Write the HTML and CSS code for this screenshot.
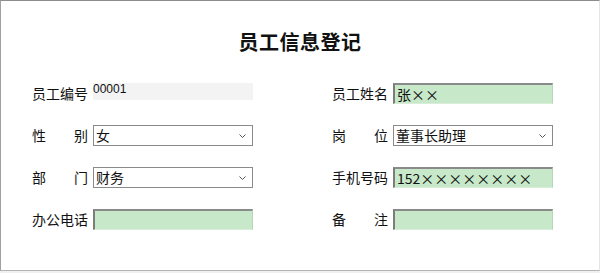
FILE: index.html
```html
<!DOCTYPE html>
<html>
<head>
  <title>员工信息登记</title>
  <link rel="stylesheet" href="styles.css">
</head>
<body>
  <div class="window">
    <h1 class="title">员工信息登记</h1>
    <div class="form">
      <div class="row">
        <div class="label"><span>员工编号</span></div>
        <div class="field readonly">00001</div>
      </div>
      <div class="row">
        <div class="label"><span>员工姓名</span></div>
        <div class="field entry">张××</div>
      </div>

      <div class="row">
        <div class="label"><span>性</span><span>别</span></div>
        <div class="field combo"><span>女</span>
          <svg class="arrow" width="7" height="5" viewBox="0 0 7 5"><path d="M0.5 0.5 L3.5 3.5 L6.5 0.5" fill="none" stroke="#555" stroke-width="1"/></svg>
        </div>
      </div>
      <div class="row">
        <div class="label"><span>岗</span><span>位</span></div>
        <div class="field combo"><span>董事长助理</span>
          <svg class="arrow" width="7" height="5" viewBox="0 0 7 5"><path d="M0.5 0.5 L3.5 3.5 L6.5 0.5" fill="none" stroke="#555" stroke-width="1"/></svg>
        </div>
      </div>

      <div class="row">
        <div class="label"><span>部</span><span>门</span></div>
        <div class="field combo"><span>财务</span>
          <svg class="arrow" width="7" height="5" viewBox="0 0 7 5"><path d="M0.5 0.5 L3.5 3.5 L6.5 0.5" fill="none" stroke="#555" stroke-width="1"/></svg>
        </div>
      </div>
      <div class="row">
        <div class="label"><span>手机号码</span></div>
        <div class="field entry">152××××××××</div>
      </div>

      <div class="row">
        <div class="label"><span>办公电话</span></div>
        <div class="field entry"></div>
      </div>
      <div class="row">
        <div class="label"><span>备</span><span>注</span></div>
        <div class="field entry"></div>
      </div>
    </div>
  </div>
</body>
</html>
```

FILE: styles.css
```css
body {
  margin: 0;
  padding: 0;
  background-color: #f0f0f0;
  font-family: "Noto Sans CJK SC", "DejaVu Sans", sans-serif;
  color: #111;
}
.window {
  box-sizing: border-box;
  width: 600px;
  height: 271px;
  background-color: #fff;
  border-top: 1px solid #8c8c8c;
  border-left: 1px solid #a0a0a0;
  border-right: 1px solid #e4e4e4;
  border-bottom: 1px solid #b4b4b4;
  padding-top: 28px;
}
.title {
  margin: 0;
  font-size: 20px;
  line-height: 26px;
  font-weight: bold;
  text-align: center;
  letter-spacing: 0.5px;
}
.form {
  display: grid;
  grid-template-columns: 221px 221px;
  column-gap: 79px;
  row-gap: 21px;
  padding-left: 31px;
  margin-top: 28px;
}
.row {
  display: flex;
  align-items: flex-start;
  gap: 5px;
  height: 21px;
}
.label {
  flex-shrink: 0;
  width: 56px;
  display: flex;
  justify-content: space-between;
  white-space: nowrap;
  font-size: 14px;
  line-height: 20px;
}
.field {
  flex-shrink: 0;
  box-sizing: border-box;
  width: 160px;
  height: 21px;
  font-size: 14px;
  line-height: 19px;
  padding-left: 2px;
  white-space: nowrap;
}
.readonly {
  background-color: #f3f3f3;
  height: 17px;
  font-family: "Liberation Sans", sans-serif;
  font-size: 12px;
  line-height: 12px;
  padding-left: 0;
}
.entry {
  background-color: #c8e8ca;
  border-top: 2px solid #8a8a8a;
  border-left: 2px solid #7c7c7c;
  border-right: 1px solid #b8d6ba;
  border-bottom: 1px solid #d8eed9;
  line-height: 18px;
}
.combo {
  display: flex;
  align-items: center;
  justify-content: space-between;
  border: 1px solid #8a8a8a;
  background-color: #fff;
  padding-right: 6px;
}
.arrow {
  display: block;
  margin-top: 1px;
}
```
